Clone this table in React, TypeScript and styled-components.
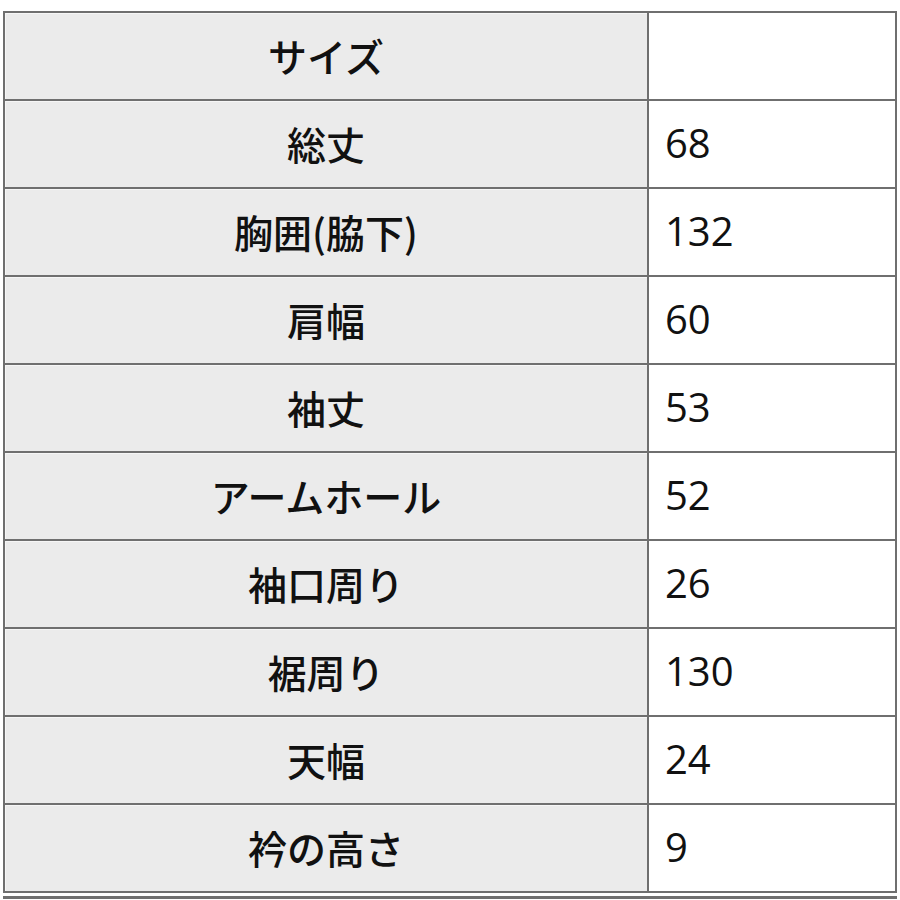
import styled, { createGlobalStyle } from 'styled-components';

const GlobalStyle = createGlobalStyle`
  body {
    margin: 0;
    background: #ffffff;
    font-family: "Open Sans", "Noto Sans CJK JP", sans-serif;
  }
`;

const Page = styled.div`
  padding: 11px 3px 0 3px;
  width: 894px;
`;

const Table = styled.div`
  display: grid;
  grid-template-columns: 642px 1fr;
  grid-auto-rows: 86px;
  gap: 2px;
  background: #6f6f6f;
  border: 2px solid #6f6f6f;
`;

const Cell = styled.div<{ $label?: boolean }>`
  display: flex;
  align-items: center;
  justify-content: ${p => (p.$label ? 'center' : 'flex-start')};
  padding-left: ${p => (p.$label ? '0' : '16px')};
  padding-bottom: 3px;
  background: ${p => (p.$label ? '#ebebeb' : '#ffffff')};
  box-shadow: inset 1px 1px 0 ${p => (p.$label ? '#f6f6f6' : '#ffffff')};
  color: #111;
  font-size: ${p => (p.$label ? '39px' : '40px')};
  font-weight: ${p => (p.$label ? 500 : 400)};
  font-family: ${p =>
    p.$label
      ? '"Noto Sans CJK JP", sans-serif'
      : '"Open Sans", "Noto Sans CJK JP", sans-serif'};
`;

const NextTable = styled.div`
  margin-top: 3px;
  border-top: 3px solid #6f6f6f;
`;

const rows: [string, string][] = [
  ['サイズ', ''],
  ['総丈', '68'],
  ['胸囲(脇下)', '132'],
  ['肩幅', '60'],
  ['袖丈', '53'],
  ['アームホール', '52'],
  ['袖口周り', '26'],
  ['裾周り', '130'],
  ['天幅', '24'],
  ['衿の高さ', '9'],
];

export default function App() {
  return (
    <Page>
      <GlobalStyle />
      <Table>
        {rows.map(([label, value]) => (
          <>
            <Cell $label key={label}>{label}</Cell>
            <Cell key={label + '-v'}>{value}</Cell>
          </>
        ))}
      </Table>
      <NextTable />
    </Page>
  );
}
